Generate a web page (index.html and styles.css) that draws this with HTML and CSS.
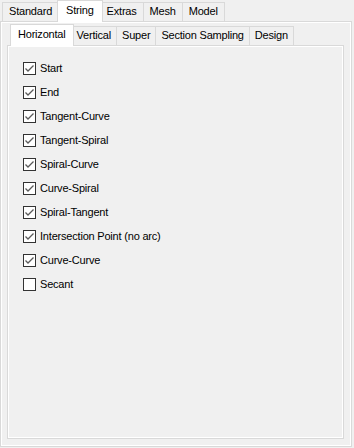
FILE: index.html
```html
<!DOCTYPE html>
<html lang="en">
<head>
  <meta charset="UTF-8" />
  <title>String Options</title>
  <link rel="stylesheet" href="styles.css">
</head>
<body>

  <div class="tabbar outer-tabs">
    <div class="tab">Standard</div>
    <div class="tab active">String</div>
    <div class="tab">Extras</div>
    <div class="tab">Mesh</div>
    <div class="tab">Model</div>
  </div>

  <div class="panel outer-panel">
    <div class="tabbar inner-tabs">
      <div class="tab active">Horizontal</div>
      <div class="tab">Vertical</div>
      <div class="tab">Super</div>
      <div class="tab">Section Sampling</div>
      <div class="tab">Design</div>
    </div>

    <div class="panel inner-panel">
      <ul class="checks" id="checks"></ul>
    </div>
  </div>

  <script>
    const opciones = [
      { label: "Start", on: true },
      { label: "End", on: true },
      { label: "Tangent-Curve", on: true },
      { label: "Tangent-Spiral", on: true },
      { label: "Spiral-Curve", on: true },
      { label: "Curve-Spiral", on: true },
      { label: "Spiral-Tangent", on: true },
      { label: "Intersection Point (no arc)", on: true },
      { label: "Curve-Curve", on: true },
      { label: "Secant", on: false }
    ];

    const lista = document.getElementById("checks");
    const tick = '<svg width="11" height="11" viewBox="0 0 11 11"><polyline points="1.5,5.5 4,8 9.5,2.5" fill="none" stroke="#5a5a5a" stroke-width="1.3"/></svg>';

    opciones.forEach(op => {
      const li = document.createElement("li");
      li.className = "check";
      li.innerHTML = `<span class="box">${op.on ? tick : ""}</span><span>${op.label}</span>`;
      li.onclick = () => {
        op.on = !op.on;
        li.querySelector(".box").innerHTML = op.on ? tick : "";
      };
      lista.appendChild(li);
    });
  </script>

</body>
</html>
```

FILE: styles.css
```css
body {
  margin: 0;
  background: #f0f0f0;
  font-family: "Liberation Sans", Arial, sans-serif;
  font-size: 11px;
  letter-spacing: -0.2px;
  color: #000;
  width: 352px;
}

.tabbar {
  display: flex;
  align-items: flex-end;
  height: 21px;
  position: relative;
  z-index: 1;
}

.outer-tabs {
  padding-left: 2px;
}

.tab {
  box-sizing: border-box;
  height: 19px;
  line-height: 17px;
  padding: 0 5px;
  margin-left: -1px;
  border: 1px solid #d9d9d9;
  border-bottom: none;
  background: #f0f0f0;
  white-space: nowrap;
}

.outer-tabs .tab {
  padding: 0 6px;
}

.tab:first-child {
  margin-left: 0;
}

.tab.active,
.outer-tabs .tab.active {
  height: 22px;
  line-height: 19px;
  margin: 0 -2px -1px -2px;
  padding: 0 7px;
  background: #ffffff;
  position: relative;
  z-index: 2;
}

.outer-tabs .tab.active {
  padding: 0 8px;
}

.tab.active:first-child {
  margin-left: 0;
}

.panel {
  box-sizing: border-box;
  border: 1px solid #d9d9d9;
  box-shadow: inset 1px 1px 0 #ffffff, inset -1px -1px 0 #ffffff;
  background: #f0f0f0;
}

.outer-panel {
  height: 426px;
  padding: 2px 7px 7px 6px;
}

.inner-tabs {
  padding-left: 3px;
}

.inner-panel {
  height: 394px;
}

.checks {
  list-style: none;
  margin: 0;
  padding: 10px 0 0 15px;
}

.check {
  display: flex;
  align-items: center;
  gap: 4px;
  height: 24px;
  cursor: default;
}

.box {
  box-sizing: border-box;
  width: 13px;
  height: 13px;
  border: 1px solid #333333;
  background: #ffffff;
  display: flex;
}
```
